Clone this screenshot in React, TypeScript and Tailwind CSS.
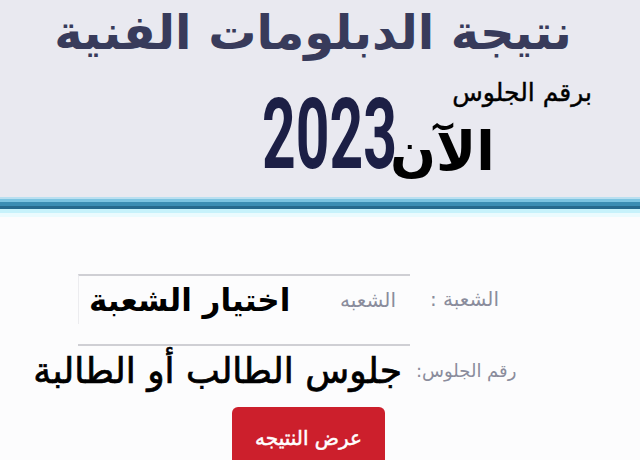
import React from "react";

export default function App() {
  const ar = { fontFamily: '"DejaVu Sans", sans-serif' };
  return (
    <div className="w-[640px] h-[460px] overflow-hidden bg-[#fcfcfd] flex flex-col" style={ar}>
      <div className="h-[197px] shrink-0 bg-[#e9e9f0] flex flex-col items-center">
        <div dir="rtl" className="mt-[2px] ml-[-14px] text-[48px] leading-[60px] font-bold text-[#383b5b] whitespace-nowrap">
          نتيجة الدبلومات الفنية
        </div>
        <div className="w-full flex flex-col items-end pr-[48px] mt-[18px]">
          <div dir="rtl" className="text-[25px] leading-[26px] text-black whitespace-nowrap [-webkit-text-stroke:0.4px_black]">برقم الجلوس</div>
        </div>
        <div className="w-full flex items-end pl-[262px] -mt-[8px]">
          <div className="w-[130px] h-[76px] relative">
            <span className="absolute left-0 top-[-12px] origin-left scale-x-[0.6] text-[98px] leading-[98px] font-bold text-[#1c1f45] whitespace-nowrap" style={{ fontFamily: 'Roboto, sans-serif' }}>
              2023
            </span>
          </div>
          <div dir="rtl" className="ml-[-2px] text-[54px] leading-[64px] font-bold text-black whitespace-nowrap mb-[-10px]">الآن</div>
        </div>
      </div>
      <div className="h-[2px] shrink-0 bg-[#b9dff0]" />
      <div className="h-[3px] shrink-0 bg-[#7cc3e0]" />
      <div className="h-[4px] shrink-0 bg-[#3b8db3]" />
      <div className="h-[3px] shrink-0 bg-[#26698d]" />
      <div className="h-[4px] shrink-0 bg-[#c7f2fb]" />
      <div className="h-[4px] shrink-0 bg-[#eafbfe]" />

      <div className="flex flex-col shrink-0 mt-[57px]">
        <div className="flex items-center pl-[78px]">
          <div className="w-[332px] h-[50px] border-t-2 border-l border-t-[#cfcfd4] border-l-[#ececef] flex items-center justify-between pl-[10px] pr-[14px]">
            <span dir="rtl" className="text-[31px] font-bold text-black whitespace-nowrap">اختيار الشعبة</span>
            <span dir="rtl" className="text-[20px] text-[#8a8c9c] whitespace-nowrap">الشعبه</span>
          </div>
          <span dir="rtl" className="ml-[20px] text-[20px] text-[#8a8c9c] whitespace-nowrap">الشعبة :</span>
        </div>
        <div className="flex items-center pl-[78px] mt-[20px]">
          <div className="w-[332px] h-[52px] border-t-2 border-t-[#cfcfd4] flex items-center justify-end pr-[8px]">
            <span dir="rtl" className="text-[36px] text-black whitespace-nowrap [-webkit-text-stroke:0.7px_black]">جلوس الطالب أو الطالبة</span>
          </div>
          <span dir="rtl" className="ml-[6px] text-[18px] text-[#8a8c9c] whitespace-nowrap">رقم الجلوس:</span>
        </div>
        <div className="flex pl-[232px] mt-[11px]">
          <div className="w-[153px] h-[60px] bg-[#cc1f2c] rounded-t-[6px] flex items-start justify-center pt-[16px]">
            <span dir="rtl" className="text-[20px] text-white whitespace-nowrap [-webkit-text-stroke:0.5px_white]">عرض النتيجه</span>
          </div>
        </div>
      </div>
    </div>
  );
}
